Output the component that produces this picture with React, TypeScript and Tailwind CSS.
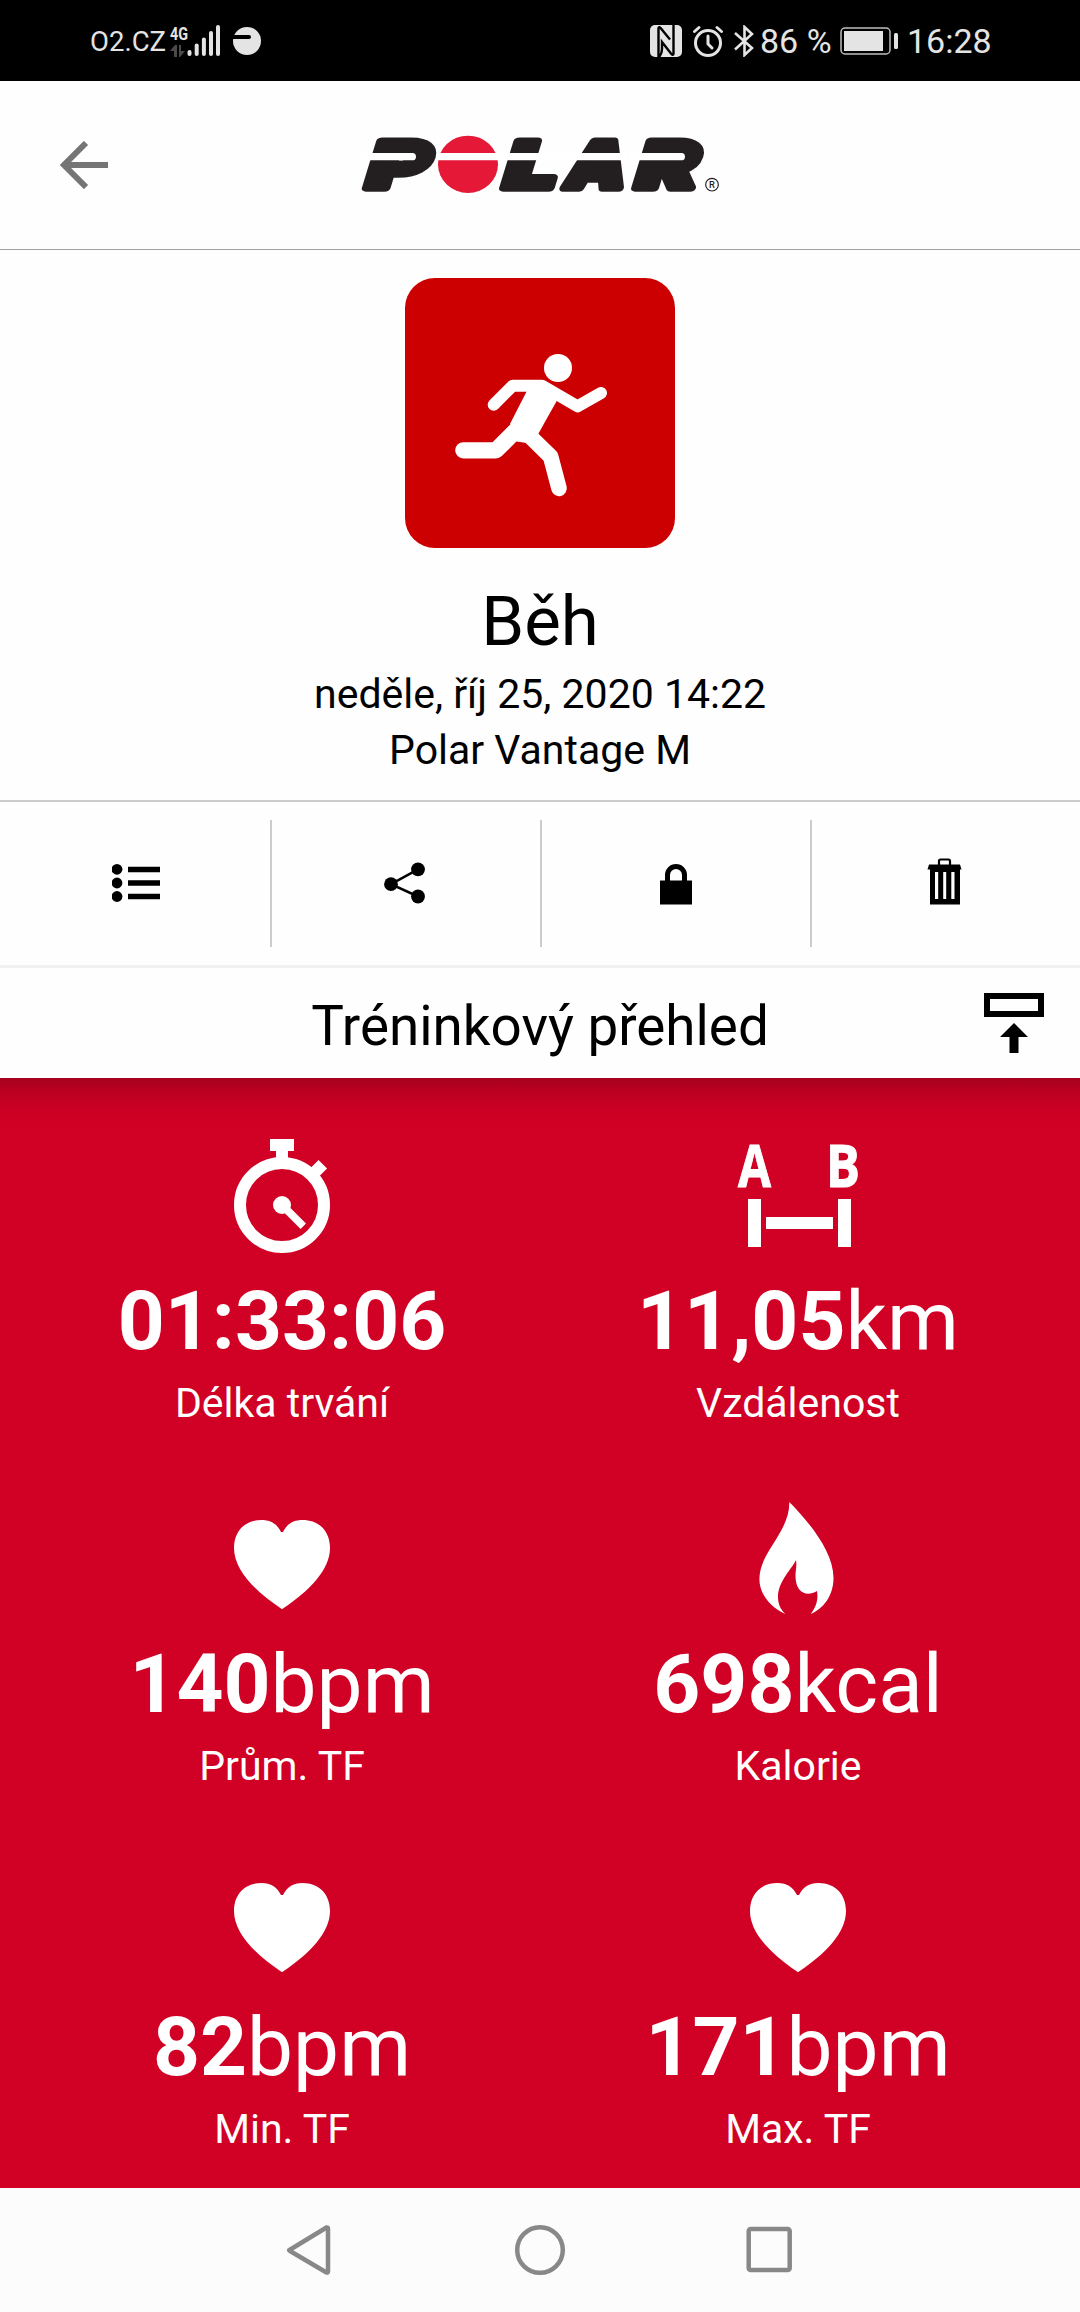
import type { ReactNode } from "react";

interface StatProps {
  icon: ReactNode;
  value: string;
  unit?: string;
  label: string;
}

function StatusBar() {
  return (
    <div className="flex h-[81px] items-center bg-black pl-[90px] pr-[90px] text-[#e4e4e4]">
      <span className="w-[80px] pt-[2px] text-[27.5px] leading-none">O2.CZ</span>
      {/* Network type, traffic arrows and signal bars */}
      <svg className="h-[44px] w-[54px] shrink-0 overflow-visible" viewBox="0 -5 54 44" fill="currentColor">
        <text x="0" y="15.500" fontSize="19" fontWeight="700" textLength="18" lengthAdjust="spacingAndGlyphs">
          4G
        </text>
        <path d="M0 27l5-6h2v12H4v-6zM9 21h2v6h4l-5 6H9z" fill="#4a4a4a" />
        <rect x="17.5" y="26" width="4" height="6" rx="2" />
        <rect x="24.7" y="19.500" width="4" height="12.5" rx="2" />
        <rect x="31.9" y="13.5" width="4" height="18.5" rx="2" />
        <rect x="39" y="7" width="4" height="25" rx="2" />
        <rect x="46" y="1" width="4" height="31" rx="2" />
      </svg>
      <svg className="ml-[9px] h-[28px] w-[28px]" viewBox="0 0 28 28">
        <circle cx="14" cy="14" r="14" fill="currentColor" />
        <path d="M0 8h16a1.7 1.7 0 0 1 0 4H0z" fill="#000" />
      </svg>

      <div className="ml-auto flex items-center">
        <svg className="h-[32px] w-[32px]" viewBox="0 0 32 32">
          <rect width="32" height="32" rx="5" fill="currentColor" />
          <path
            d="M8.500 32V3Q9 1 11 3.500L20 14.500M23.500 0V29Q23 31 21 28.500L12 17V24Q12 29 9 32"
            fill="none"
            stroke="#000"
            strokeWidth="2.400"
          />
        </svg>
        <svg
          className="ml-[10px] h-[32px] w-[32px]"
          viewBox="0 0 32 32"
          fill="none"
          stroke="currentColor"
          strokeWidth="3"
          strokeLinecap="round"
        >
          <circle cx="16" cy="18" r="12.5" />
          <path d="M16 11v8l4 4M2.5 6.5L7 2.5M29.500 6.500L25 2.500" />
        </svg>
        <svg
          className="ml-[10px] h-[32px] w-[20px]"
          viewBox="0 0 20 32"
          fill="none"
          stroke="currentColor"
          strokeWidth="2.600"
        >
          <path d="M1 8l17 15-7.500 7V2l7.500 7L1 24.500" />
        </svg>
        <span className="ml-[6px] w-[80px] whitespace-nowrap text-[34px] leading-none">86 %</span>
        <svg className="h-[28px] w-[58px]" viewBox="0 0 58 28">
          <rect x="1" y="1" width="49" height="26" rx="4" fill="none" stroke="#bdbdbd" strokeWidth="1.500" />
          <rect x="4" y="4" width="39" height="20" fill="currentColor" />
          <rect x="54" y="6" width="4" height="16" rx="1.500" fill="currentColor" />
        </svg>
        <span className="ml-[9px] w-[83px] whitespace-nowrap text-[34px] leading-none">16:28</span>
      </div>
    </div>
  );
}

function PolarLogo() {
  return (
    <svg className="h-[110px] w-[400px]" viewBox="0 0 1200 330" role="img" aria-label="Polar">
      <g
        fill="#231f20"
        stroke="#231f20"
        strokeWidth="22"
        strokeLinejoin="round"
        fontFamily="Inter, sans-serif"
        fontWeight="900"
        fontSize="193"
      >
        <text transform="translate(68 233) skewX(-17)" textLength="182" lengthAdjust="spacingAndGlyphs">P</text>
        <text transform="translate(480 233) skewX(-17)" textLength="156" lengthAdjust="spacingAndGlyphs">L</text>
        <text transform="translate(666 233) skewX(-15)" textLength="178" lengthAdjust="spacingAndGlyphs">A</text>
        <text transform="translate(876 233) skewX(-17)" textLength="180" lengthAdjust="spacingAndGlyphs">R</text>
      </g>
      <ellipse cx="384" cy="163" rx="90" ry="86" fill="#e51937" />
      <path d="M60 129H217a11 11 0 0 1 0 22H60zM290 129H860V151H290zM870 129H1024a11 11 0 0 1 0 22H870z" fill="#fff" />
      <circle cx="1116" cy="224" r="19" fill="none" stroke="#231f20" strokeWidth="3.500" />
      <text x="1107" y="234" fontSize="28" fontWeight="500" fill="#231f20">
        R
      </text>
    </svg>
  );
}

function RunnerIcon() {
  return (
    <svg className="h-[270px] w-[270px] rounded-[30px] bg-[#cc0000]" viewBox="15 24 810 810">
      <circle cx="474" cy="294" r="42" fill="#fff" />
      <path d="M381 362L425 330L470 393L415 491L375 518L345 514L331 460Z" fill="#fff" />
      <g fill="none" stroke="#fff" strokeLinecap="round" strokeLinejoin="round">
        <path d="M281 404L338 347H426L533 409L603 369" strokeWidth="36" />
        <path d="M190 541H288L355 474" strokeWidth="49" />
        <path d="M392 501L452 560L477 655" strokeWidth="47" />
      </g>
    </svg>
  );
}

function StopwatchIcon() {
  return (
    <svg className="h-[120px] w-[120px]" viewBox="0 0 120 120" fill="none" stroke="#fff">
      <circle cx="60" cy="69" r="42" strokeWidth="12" />
      <path d="M48 9H72M89 40L100.800 28.200" strokeWidth="12" />
      <path d="M60 12V26" strokeWidth="12" />
      <path d="M60 69L81.300 90.200" strokeWidth="7.700" />
      <circle cx="60" cy="69" r="9" fill="#fff" stroke="none" />
    </svg>
  );
}

function DistanceIcon() {
  return (
    <svg className="h-[120px] w-[120px] overflow-visible" viewBox="0 0 120 120" fill="#fff">
      <g fontFamily="Open Sans, sans-serif" fontWeight="700" fontSize="59" stroke="#fff" strokeWidth="1">
        <text x="0" y="51" textLength="33" lengthAdjust="spacingAndGlyphs">A</text>
        <text x="88" y="51" textLength="34" lengthAdjust="spacingAndGlyphs">B</text>
      </g>
      <rect x="10" y="63" width="13" height="48" />
      <rect x="28" y="81" width="67" height="12" />
      <rect x="100" y="63" width="13" height="48" />
    </svg>
  );
}

function HeartIcon() {
  return (
    <svg className="h-[120px] w-[120px]" viewBox="0 0 120 120" fill="#fff">
      <path d="M59 33C55 25 49 21 39.500 21C22 21 12 33 12 49C12 71 33 92 59 109.500Q60 110.500 61 109.500C87 92 108 71 108 49C108 33 98 21 80.500 21C71 21 65 25 61 33Z" />
    </svg>
  );
}

function FlameIcon() {
  return (
    <svg className="h-[120px] w-[120px]" viewBox="0 0 120 120" fill="#fff">
      <path d="M51.300 3C70 22 95.500 52 95.500 79C95.500 97 85 110 72.700 115C78 108 80.500 101 79 92C68 98.500 57.500 93 57.500 77C57.500 71 59 68 58 61C54 70 40 82 40 98C40 104 42 110 47.300 115C32 108 21.400 95 21.400 80C21.400 53 52 33 51.300 3Z" />
    </svg>
  );
}

function Toolbar() {
  return (
    <div className="grid h-[166px] grid-cols-4 border-b-[3px] border-[#f0f0f0] pb-[18px] pt-[18px]">
      <button className="flex items-center justify-center pl-[2px]" aria-label="Seznam">
        <svg className="h-[48px] w-[48px]" viewBox="0 0 48 48">
          <circle cx="5" cy="9.300" r="5.400" />
          <circle cx="5" cy="23" r="5.400" />
          <circle cx="5" cy="36.500" r="5.400" />
          <path d="M16 9.500H48M16 23H48M16 36.500H48" stroke="#000" strokeWidth="5.300" />
        </svg>
      </button>
      <button className="flex items-center justify-center border-l-2 border-[#ccc]" aria-label="Sdílet">
        <svg className="h-[48px] w-[48px]" viewBox="0 0 48 48">
          <path d="M36 9.300L9 24.200L36 36.500" fill="none" stroke="#000" strokeWidth="2.500" />
          <circle cx="36" cy="9.300" r="6.900" />
          <circle cx="9" cy="24.200" r="6.900" />
          <circle cx="36" cy="36.500" r="6.900" />
        </svg>
      </button>
      <button className="flex items-center justify-center border-l-2 border-[#ccc]" aria-label="Soukromí">
        <svg className="h-[48px] w-[48px]" viewBox="0 0 48 48">
          <path d="M15.500 24V15a8.500 8.500 0 0 1 17 0V24" fill="none" stroke="#000" strokeWidth="5" />
          <rect x="8" y="20.500" width="32" height="24" />
        </svg>
      </button>
      <button className="flex items-center justify-center border-l-2 border-[#ccc] pr-[2px]" aria-label="Smazat">
        <svg className="h-[48px] w-[48px] overflow-visible" viewBox="0 0 48 48">
          <path d="M18 5V1q0-1.500 1.500-1.500h8q1.500 0 1.500 1.500v4" fill="none" stroke="#000" strokeWidth="2.200" />
          <path d="M8 4.500h31l1.500 5H6.500z" />
          <path
            d="M9 8h30v36.500H9zM14 12v27h3.200V12zM22.200 12v27h3V12zM30.300 12v27h3.200V12z"
            fillRule="evenodd"
          />
        </svg>
      </button>
    </div>
  );
}

function Stat({ icon, value, unit, label }: StatProps) {
  return (
    <div className="flex h-[363px] flex-col items-center">
      {icon}
      <p className="mt-[17px] h-[96px] whitespace-nowrap text-[82px] leading-[96px]">
        <span className="font-bold">{value}</span>
        {unit}
      </p>
      <p className="mt-[6px] text-[41px] leading-[56px]">{label}</p>
    </div>
  );
}

const stats: StatProps[] = [
  { icon: <StopwatchIcon />, value: "01:33:06", label: "Délka trvání" },
  { icon: <DistanceIcon />, value: "11,05", unit: "km", label: "Vzdálenost" },
  { icon: <HeartIcon />, value: "140", unit: "bpm", label: "Prům. TF" },
  { icon: <FlameIcon />, value: "698", unit: "kcal", label: "Kalorie" },
  { icon: <HeartIcon />, value: "82", unit: "bpm", label: "Min. TF" },
  { icon: <HeartIcon />, value: "171", unit: "bpm", label: "Max. TF" },
];

export default function App() {
  return (
    <div className="flex h-[2312px] w-[1080px] flex-col overflow-hidden bg-[#fefefe] font-[Roboto,sans-serif] text-black">
      <StatusBar />

      <header className="grid h-[169px] grid-cols-[340px_400px_340px] items-center border-b border-[#a2a2a2]">
        <button className="ml-[60px] h-[48px] w-[48px]" aria-label="Zpět">
          <svg className="h-[48px] w-[48px]" viewBox="0 0 48 48" fill="none" stroke="#757575">
            <path d="M26 2L4 24L26 46M4 24H48" strokeWidth="6" />
          </svg>
        </button>
        <PolarLogo />
      </header>

      <section className="flex h-[552px] flex-col items-center border-b-2 border-[#ccc] pt-[28px]">
        <RunnerIcon />
        <h1 className="mt-[34px] text-[69px] leading-[80px]">Běh</h1>
        <p className="mt-[4px] text-[41px] leading-[56px]">neděle, říj 25, 2020 14:22</p>
        <p className="text-[41px] leading-[56px]">Polar Vantage M</p>
      </section>

      <Toolbar />

      <div className="grid h-[110px] grid-cols-[96px_1fr_96px] items-center">
        <h2 className="col-start-2 pt-[6px] text-center text-[54.8px] leading-[64px]">Tréninkový přehled</h2>
        <svg className="h-[60px] w-[60px]" viewBox="0 0 60 60">
          <rect x="3" y="3" width="54" height="18" fill="none" stroke="#000" strokeWidth="6" />
          <path d="M30 30L44 44H34.500V60H25.500V44H16Z" />
        </svg>
      </div>

      <main className="h-[1110px] overflow-hidden bg-[#d10025] bg-[linear-gradient(to_bottom,rgba(0,0,0,0.2),rgba(0,0,0,0.1)_14px,rgba(0,0,0,0.03)_32px,transparent_50px)] px-6 pt-[58px] text-white">
        <div className="grid grid-cols-2">
          {stats.map((stat) => (
            <Stat key={stat.label} {...stat} />
          ))}
        </div>
      </main>

      <nav className="flex h-[124px] items-center bg-[#fcfcfc] pl-[284px]">
        <svg className="h-[52px] w-[510px]" viewBox="0 0 510 52" fill="none" stroke="#888" strokeWidth="4.500">
          <path d="M5.500 26L42.500 3.500Q44 3 44 5V47Q44 49 42.500 48.500L6 27Q4.500 26 5.500 26Z" strokeLinejoin="round" />
          <circle cx="256" cy="26" r="22.800" />
          <rect x="464.700" y="5" width="41" height="41" rx="2" />
        </svg>
      </nav>
    </div>
  );
}
